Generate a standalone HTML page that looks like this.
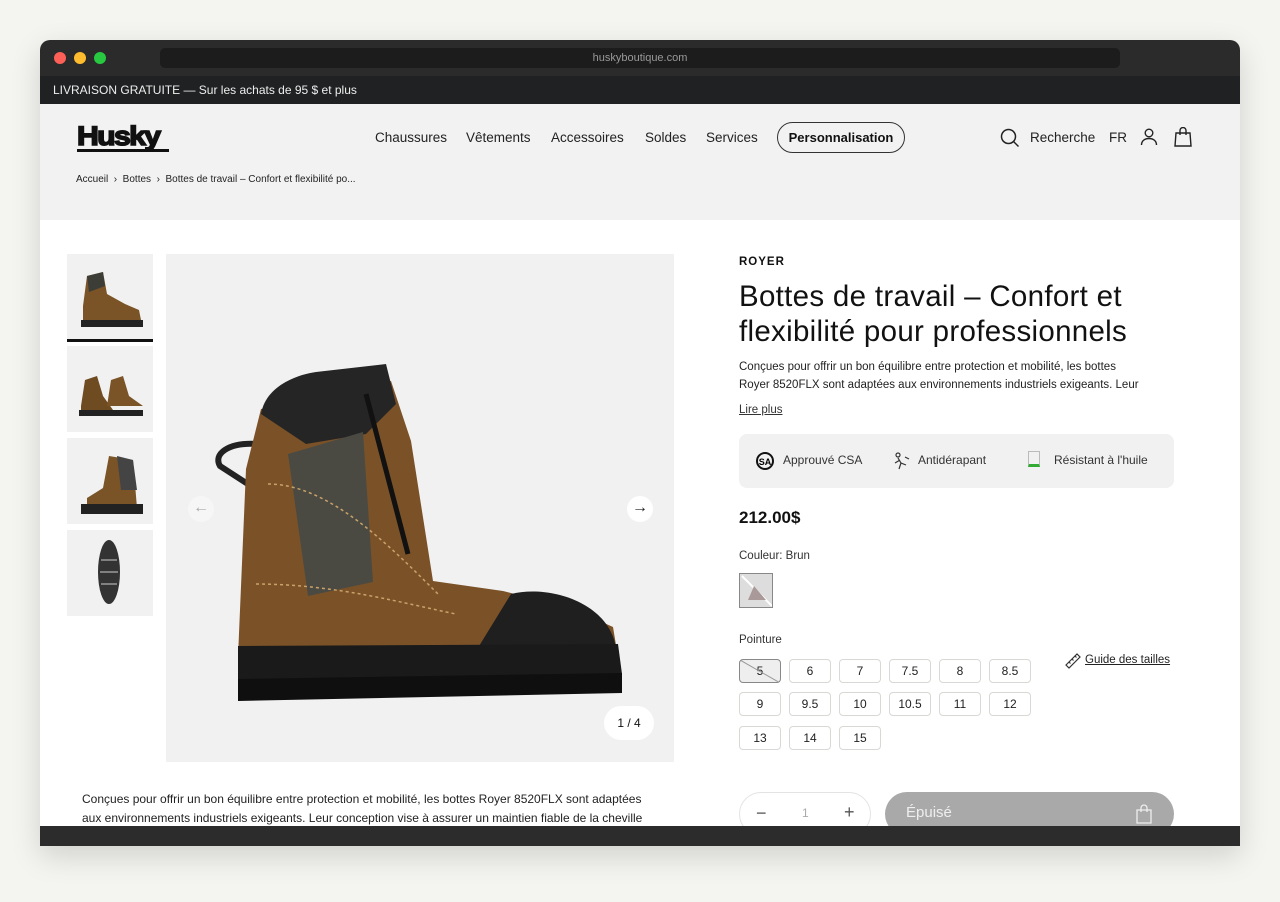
<!DOCTYPE html>
<html><head><meta charset="utf-8"><style>
*{box-sizing:border-box;margin:0;padding:0}
body{width:1280px;height:902px;background:#f4f4f0;font-family:"Liberation Sans",sans-serif;color:#111;position:relative;overflow:hidden}
.win{position:absolute;left:40px;top:40px;width:1200px;height:806px;border-radius:10px 10px 0 0;overflow:hidden;background:#fff;box-shadow:0 10px 30px rgba(0,0,0,.15)}
.tb{position:absolute;left:0;top:0;width:1200px;height:36px;background:#2b2b2b}
.dot{position:absolute;top:12px;width:12px;height:12px;border-radius:50%}
.url{position:absolute;left:120px;top:8px;width:960px;height:20px;background:#1c1c1c;border-radius:5px;color:#999;font-size:11px;text-align:center;line-height:20px}
.ann{position:absolute;left:0;top:36px;width:1200px;height:28px;background:#1f2123;color:#eee;font-size:12px;line-height:28px;padding-left:13px}
.hdr{position:absolute;left:0;top:64px;width:1200px;height:116px;background:#f2f2f2}
.a{position:absolute;white-space:nowrap}
.nav{font-size:13.5px;color:#222;top:26px}
.bc{font-size:10px;color:#222;top:70px}
.sz{position:absolute;width:42px;height:24px;border:1px solid #d8d8d4;border-radius:4px;font-size:12px;text-align:center;line-height:22px;color:#222}
.thumb{position:absolute;left:27px;width:86px;height:86px;background:#f1f1f1}
</style></head><body>
<div class="win">
<div class="tb"><div class="dot" style="left:14px;background:#fe5f57"></div><div class="dot" style="left:34px;background:#febc2e"></div><div class="dot" style="left:54px;background:#28c840"></div><div class="url">huskyboutique.com</div></div>
<div class="ann">LIVRAISON GRATUITE — Sur les achats de 95 $ et plus</div>
<div class="hdr">
 <div class="a" style="left:37px;top:18px;font-weight:bold;font-size:27px;letter-spacing:-1.5px;transform:scaleX(1.12);transform-origin:left;line-height:28px;-webkit-text-stroke:1.5px #111">Husky</div>
 <div class="a" style="left:37px;top:45px;width:92px;height:3px;background:#111"></div>
 <div class="a nav" style="left:335px">Chaussures</div>
 <div class="a nav" style="left:426px">Vêtements</div>
 <div class="a nav" style="left:511px">Accessoires</div>
 <div class="a nav" style="left:605px">Soldes</div>
 <div class="a nav" style="left:666px">Services</div>
 <div class="a" style="left:737px;top:18px;width:128px;height:31px;border:1px solid #333;border-radius:16px;font-size:13px;font-weight:bold;text-align:center;line-height:29px">Personnalisation</div>
 <svg class="a" style="left:960px;top:24px" width="20" height="20" viewBox="0 0 20 20" fill="none" stroke="#222" stroke-width="1.5"><circle cx="8.5" cy="8.5" r="7"/><path d="M13.5 13.5l5 5"/></svg>
 <div class="a nav" style="left:990px">Recherche</div>
 <div class="a nav" style="left:1069px">FR</div>
 <svg class="a" style="left:1100px;top:24px" width="18" height="18" viewBox="0 0 18 18" fill="none" stroke="#222" stroke-width="1.4"><circle cx="9" cy="5" r="3.8"/><path d="M1.5 17c0-4 3-6.5 7.5-6.5s7.5 2.5 7.5 6.5"/></svg>
 <svg class="a" style="left:1134px;top:23px" width="18" height="20" viewBox="0 0 18 20" fill="none" stroke="#222" stroke-width="1.4"><path d="M2 6h14l1 13H1z"/><path d="M6 8V3.5a3 3 0 016 0V8"/></svg>
 <div class="a bc" style="left:36px">Accueil &nbsp;›&nbsp; Bottes &nbsp;›&nbsp; Bottes de travail – Confort et flexibilité po...</div>
</div>
<!-- thumbs -->
<div class="thumb" style="top:214px"><svg width="86" height="86" viewBox="0 0 86 86"><path d="M16 52l4-30 16-4 4 22 18 10 14 6 2 10-58 0z" fill="#7a5326"/><path d="M20 22l16-4 2 14-16 6z" fill="#3d3d38"/><path d="M14 66h62v7H14z" fill="#222"/></svg></div>
<div class="a" style="left:27px;top:299px;width:86px;height:3px;background:#111"></div>
<div class="thumb" style="top:306px"><svg width="86" height="86" viewBox="0 0 86 86"><path d="M14 60l4-26 12-4 6 20 10 14H14z" fill="#6f4b22"/><path d="M40 60l4-26 12-4 6 20 14 10H40z" fill="#7a5326"/><path d="M12 64h64v6H12z" fill="#222"/></svg></div>
<div class="thumb" style="top:398px"><svg width="86" height="86" viewBox="0 0 86 86"><path d="M20 60l16-10 6-32 24 4 4 48-50 0z" fill="#7a5326"/><path d="M50 18l16 4 4 30-16 0z" fill="#444"/><path d="M14 66h62v10H14z" fill="#222"/></svg></div>
<div class="thumb" style="top:490px"><svg width="86" height="86" viewBox="0 0 86 86"><ellipse cx="42" cy="42" rx="11" ry="32" fill="#333"/><path d="M34 30h16M33 42h18M34 54h16" stroke="#999" stroke-width="1.5"/></svg></div>
<!-- main image -->
<div class="a" style="left:126px;top:214px;width:508px;height:508px;background:#f1f1f1">
 <svg width="508" height="508" viewBox="0 0 508 508">
  <path d="M92 190c-30-2-45 10-38 22l34 22" stroke="#222" stroke-width="6" fill="none"/>
  <path d="M80 215l15-60 130-28 20 60 22 140 70 10 70 18 40 18 5 30-380 0z" fill="#7b5228"/>
  <path d="M95 160c5-30 40-40 55-42l70-8 10 40-30 30-60 10z" fill="#252525"/>
  <path d="M122 200l75-22 10 150-65 14z" fill="#4b4a42"/>
  <path d="M200 140l42 160" stroke="#111" stroke-width="5"/>
  <path d="M102 230c60 0 120 60 170 110M90 330c80 0 150 20 200 30" stroke="#c9a26a" stroke-width="1.5" fill="none" stroke-dasharray="3 3"/>
  <path d="M345 340c40-10 100 10 105 55l2 15-150 0z" fill="#1f1f1f"/>
  <path d="M72 392l380-2 4 30-384 6z" fill="#1a1a1a"/>
  <path d="M72 425l384-6 0 20-384 8z" fill="#0f0f0f"/>
 </svg>
 <div class="a" style="left:22px;top:242px;width:26px;height:26px;border-radius:50%;background:#f6f6f6;color:#aaa;text-align:center;line-height:24px;font-size:16px">←</div>
 <div class="a" style="left:461px;top:242px;width:26px;height:26px;border-radius:50%;background:#fff;color:#222;text-align:center;line-height:24px;font-size:16px">→</div>
 <div class="a" style="left:438px;top:452px;width:50px;height:34px;border-radius:17px;background:#fff;font-size:12px;text-align:center;line-height:34px">1 / 4</div>
</div>
<div class="a" style="left:42px;top:750px;font-size:12px;line-height:19px;color:#222;white-space:normal;width:580px">Conçues pour offrir un bon équilibre entre protection et mobilité, les bottes Royer 8520FLX sont adaptées aux environnements industriels exigeants. Leur conception vise à assurer un maintien fiable de la cheville</div>
<!-- right column -->
<div class="a" style="left:699px;top:216px;font-size:11.5px;font-weight:bold;letter-spacing:1px">ROYER</div>
<div class="a" style="left:699px;top:239px;font-size:29.5px;letter-spacing:0.3px;line-height:35px;white-space:normal;width:470px">Bottes de travail – Confort et flexibilité pour professionnels</div>
<div class="a" style="left:699px;top:318px;font-size:11.5px;line-height:18px;color:#222">Conçues pour offrir un bon équilibre entre protection et mobilité, les bottes<br>Royer 8520FLX sont adaptées aux environnements industriels exigeants. Leur</div>
<div class="a" style="left:699px;top:364px;font-size:11.5px;text-decoration:underline;color:#333">Lire plus</div>
<div class="a" style="left:699px;top:394px;width:435px;height:54px;background:#f1f1f1;border-radius:8px">
 <svg class="a" style="left:16px;top:17px" width="20" height="20" viewBox="0 0 20 20"><circle cx="10" cy="10" r="8" fill="none" stroke="#111" stroke-width="2"/><text x="10" y="14" font-size="9" font-weight="bold" text-anchor="middle" font-family="Liberation Sans">SA</text></svg>
 <div class="a" style="left:44px;top:19px;font-size:12px;color:#333">Approuvé CSA</div>
 <svg class="a" style="left:152px;top:17px" width="20" height="20" viewBox="0 0 20 20" fill="none" stroke="#333" stroke-width="1.2"><circle cx="7" cy="4" r="2"/><path d="M7 7l3 5 5 2M9 9l-5 3M10 12l-2 6M14 6l4 2"/></svg>
 <div class="a" style="left:179px;top:19px;font-size:12px;color:#333">Antidérapant</div>
 <div class="a" style="left:289px;top:17px;width:12px;height:16px;border:1px solid #bbb;border-bottom:3px solid #3a3"></div>
 <div class="a" style="left:315px;top:19px;font-size:12px;color:#333">Résistant à l'huile</div>
</div>
<div class="a" style="left:699px;top:468px;font-size:17px;font-weight:bold">212.00$</div>
<div class="a" style="left:699px;top:510px;font-size:11.5px;color:#333">Couleur: Brun</div>
<div class="a" style="left:699px;top:533px;width:34px;height:35px;border:1px solid #888;background:#ddd"><svg width="32" height="33"><path d="M2 2l30 30" stroke="#fff" stroke-width="2"/><path d="M8 26l6-14 12 14z" fill="#a99"/></svg></div>
<div class="a" style="left:699px;top:594px;font-size:11.5px;color:#333">Pointure</div>
<div class="sz" style="left:699px;top:619px;background:#eee;border-color:#888;overflow:hidden">5<svg class="a" style="left:0;top:0" width="42" height="24"><path d="M0 0l42 24" stroke="#999"/></svg></div>
<div class="sz" style="left:749px;top:619px">6</div><div class="sz" style="left:799px;top:619px">7</div><div class="sz" style="left:849px;top:619px">7.5</div><div class="sz" style="left:899px;top:619px">8</div><div class="sz" style="left:949px;top:619px">8.5</div>
<div class="sz" style="left:699px;top:652px">9</div><div class="sz" style="left:749px;top:652px">9.5</div><div class="sz" style="left:799px;top:652px">10</div><div class="sz" style="left:849px;top:652px">10.5</div><div class="sz" style="left:899px;top:652px">11</div><div class="sz" style="left:949px;top:652px">12</div>
<div class="sz" style="left:699px;top:686px">13</div><div class="sz" style="left:749px;top:686px">14</div><div class="sz" style="left:799px;top:686px">15</div>
<svg class="a" style="left:1024px;top:612px" width="18" height="18" viewBox="0 0 18 18" fill="none" stroke="#333" stroke-width="1.2"><path d="M2 13L13 2l3 3L5 16z"/><path d="M5 10l1.5 1.5M8 7l1.5 1.5M11 4l1.5 1.5"/></svg>
<div class="a" style="left:1045px;top:614px;font-size:11.5px;text-decoration:underline;color:#222">Guide des tailles</div>
<div class="a" style="left:699px;top:752px;width:132px;height:44px;border:1px solid #e3e3e3;border-radius:22px;background:#fff">
 <div class="a" style="left:16px;top:10px;font-size:18px;color:#555">−</div>
 <div class="a" style="left:62px;top:13px;font-size:12px;color:#aaa">1</div>
 <div class="a" style="left:104px;top:9px;font-size:18px;color:#555">+</div>
</div>
<div class="a" style="left:845px;top:752px;width:289px;height:44px;border-radius:22px;background:#a9a9a9">
 <div class="a" style="left:21px;top:12px;font-size:15px;color:#eee">Épuisé</div>
 <svg class="a" style="left:250px;top:12px" width="18" height="20" viewBox="0 0 18 20" fill="none" stroke="#eee" stroke-width="1.3"><path d="M2 6h14v13H2z"/><path d="M6 8V4a3 3 0 016 0v4"/></svg>
</div>
<div class="a" style="left:0;top:786px;width:1200px;height:20px;background:#2c2c2c"></div>
</div>
</body></html>
